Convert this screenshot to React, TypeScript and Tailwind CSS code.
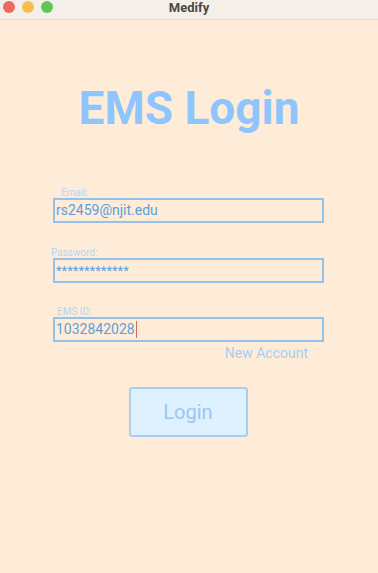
import React from "react";

function Field({ label, labelOffset, labelTop, children }: { label: string; labelOffset: string; labelTop: string; children: React.ReactNode }) {
  return (
    <div className={`flex flex-col ${labelTop}`}>
      <div className={`text-[10px] leading-[10px] text-[#b8d5f0] ${labelOffset}`}>{label}</div>
      <div className="h-[25px] w-[271px] border-2 border-[#93c2ea] flex items-center pl-[1px] text-[14px] text-[#5b9fd9]">
        {children}
      </div>
    </div>
  );
}

export default function App() {
  return (
    <div className="w-[378px] h-[573px] flex flex-col bg-[#feecd9] overflow-hidden" style={{ fontFamily: "Roboto, 'Liberation Sans', sans-serif" }}>
      <div className="h-[20px] shrink-0 bg-[#f5efe9] border-b border-[#eadfd4] relative flex items-center justify-center">
        <div className="absolute left-[3px] top-[1px] flex gap-[7px]">
          <div className="w-[12px] h-[12px] rounded-full bg-[#ec6a5f]" />
          <div className="w-[12px] h-[12px] rounded-full bg-[#f4bf4f]" />
          <div className="w-[12px] h-[12px] rounded-full bg-[#61c554]" />
        </div>
        <div className="text-[13px] font-bold text-[#4b4845] leading-none -mt-[4px]">Medify</div>
      </div>
      <div className="flex flex-col items-center">
        <div className="mt-[60px] text-[46px] font-bold leading-[56px] text-[#8fc5fd] ml-[0px]">EMS Login</div>
      </div>
      <div className="ml-[53px] flex flex-col">
        <Field label="Email:" labelOffset="ml-[8px]" labelTop="mt-[52px]">
          rs2459@njit.edu
        </Field>
        <Field label="Password:" labelOffset="-ml-[2px]" labelTop="mt-[25px]">
          <span className="text-[13px] tracking-[0px]">*************</span>
        </Field>
        <Field label="EMS ID:" labelOffset="ml-[4px]" labelTop="mt-[24px]">
          <span>1032842028</span>
          <span className="inline-block w-[1.5px] h-[17px] bg-[#d9665a] ml-[1px]" />
        </Field>
        <div className="w-[271px] flex justify-end pr-[16px] mt-[3px] text-[14px] leading-[16px] text-[#a9cdef]">New Account</div>
      </div>
      <div className="flex justify-center mt-[26px] -ml-[2px]">
        <div className="w-[119px] h-[50px] rounded-[3px] border-2 border-[#a8cff0] bg-[#dff0ff] flex items-center justify-center text-[20px] text-[#98c8f2]">
          Login
        </div>
      </div>
    </div>
  );
}
